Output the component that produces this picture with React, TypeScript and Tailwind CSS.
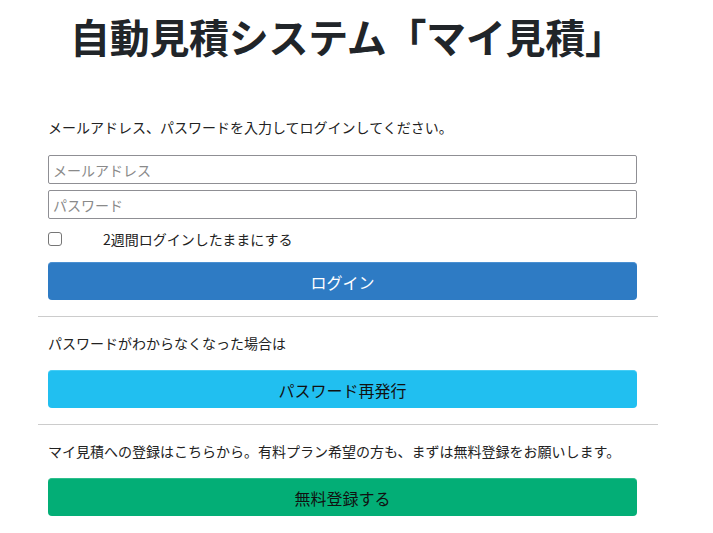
import React from "react";

const font = { fontFamily: '"Noto Sans CJK JP", "Noto Sans", sans-serif' };

export default function App() {
  return (
    <div className="bg-white w-[713px] h-[533px] text-[#222]" style={font}>
      <h1 className="pl-[70px] pt-[16px] text-[40px] font-bold leading-[40px] text-[#212529] tracking-[-0.3px]">
        自動見積システム「マイ見積」
      </h1>
      <div className="ml-[38px] w-[620px] mt-[61px]">
        <div className="pl-[10px] pr-[21px]">
          <p className="text-[14px] leading-[20px]">メールアドレス、パスワードを入力してログインしてください。</p>
          <div className="mt-[18px] flex flex-col gap-[6px]">
            <input
              className="h-[29px] w-full border border-[#8f8f94] rounded-[2px] px-[4px] text-[14px] placeholder:text-[#8a8a8a] outline-none"
              placeholder="メールアドレス"
            />
            <input
              type="password"
              className="h-[29px] w-full border border-[#8f8f94] rounded-[2px] px-[4px] text-[14px] placeholder:text-[#8a8a8a] outline-none"
              placeholder="パスワード"
            />
          </div>
          <div className="mt-[12px] flex items-center h-[16px]">
            <span className="w-[14px] h-[14px] border border-[#767676] rounded-[3px] bg-white" />
            <span className="ml-[41px] text-[14px] leading-[16px]">2週間ログインしたままにする</span>
          </div>
          <button className="mt-[15px] w-full h-[38px] rounded-[4px] bg-[#2e7bc4] border-t border-[#4a90d2] text-white text-[16px]">
            ログイン
          </button>
        </div>
        <div className="mt-[16px] h-px bg-[#cccccc]" />
        <div className="pl-[10px] pr-[21px]">
          <p className="mt-[16px] text-[14px] leading-[20px]">パスワードがわからなくなった場合は</p>
          <button className="mt-[17px] w-full h-[38px] rounded-[4px] bg-[#21bff0] border-t border-[#45cdf5] text-[#111] text-[16px]">
            パスワード再発行
          </button>
        </div>
        <div className="mt-[16px] h-px bg-[#cccccc]" />
        <div className="pl-[10px] pr-[21px]">
          <p className="mt-[16px] text-[14px] leading-[20px]">マイ見積への登録はこちらから。有料プラン希望の方も、まずは無料登録をお願いします。</p>
          <button className="mt-[17px] w-full h-[38px] rounded-[4px] bg-[#03ae76] border-t border-[#2dbf8c] text-[#111] text-[16px]">
            無料登録する
          </button>
        </div>
      </div>
    </div>
  );
}
